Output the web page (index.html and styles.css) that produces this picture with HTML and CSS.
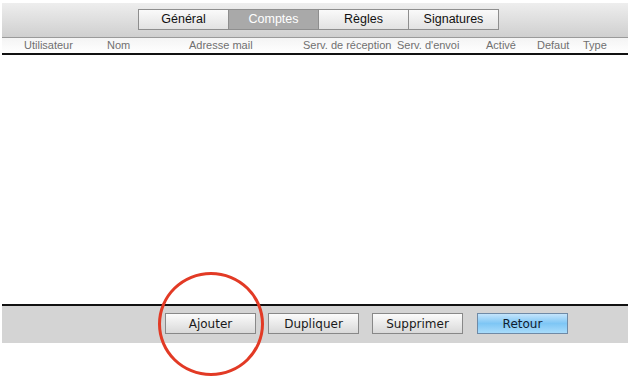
FILE: index.html
```html
<!DOCTYPE html>
<html lang="fr">
<head>
  <meta charset="UTF-8">
  <title>Comptes</title>
  <link rel="stylesheet" href="styles.css">
</head>
<body>
  <div class="window">
    <div class="toolbar">
      <div class="tabs">
        <div class="tab">Général</div>
        <div class="tab active">Comptes</div>
        <div class="tab">Règles</div>
        <div class="tab">Signatures</div>
      </div>
    </div>
    <div class="table-head">
      <span class="col c-user">Utilisateur</span>
      <span class="col c-nom">Nom</span>
      <span class="col c-mail">Adresse mail</span>
      <span class="col c-recv">Serv. de réception</span>
      <span class="col c-send">Serv. d'envoi</span>
      <span class="col c-act">Activé</span>
      <span class="col c-def">Defaut</span>
      <span class="col c-type">Type</span>
    </div>
    <div class="table-body"></div>
    <div class="actions">
      <button class="btn">Ajouter</button>
      <button class="btn">Dupliquer</button>
      <button class="btn">Supprimer</button>
      <button class="btn primary">Retour</button>
    </div>
    <div class="highlight"></div>
  </div>
</body>
</html>
```

FILE: styles.css
```css
body {
  margin: 0;
  background: #fff;
  font-family: 'Liberation Sans', Arial, sans-serif;
}

.window {
  position: relative;
  width: 626px;
  min-height: 375px;
  margin: 0 2px;
  padding-top: 3px;
}

.toolbar {
  height: 34px;
  background: linear-gradient(#eeeeee, #cfcfcf);
  display: flex;
  justify-content: center;
  padding-top: 6px;
  box-sizing: border-box;
}

.tabs {
  display: flex;
  height: 21px;
  margin-left: 7px;
  border: 1px solid #8e8e8e;
  box-sizing: border-box;
  align-self: flex-start;
}

.tab {
  width: 89px;
  text-align: center;
  font-size: 12.5px;
  line-height: 19px;
  color: #111;
  background: linear-gradient(#fafafa, #e2e2e2);
  border-left: 1px solid #8e8e8e;
}

.tab:first-child {
  border-left: none;
}

.tab.active {
  background: #a9a9a9;
  color: #fff;
}

.table-head {
  display: flex;
  height: 15px;
  border-top: 1px solid #9a9a9a;
  border-bottom: 2px solid #111;
  background: linear-gradient(#f4f4f4, #ffffff);
  font-size: 11px;
  line-height: 15px;
  color: #707070;
}

.col {
  white-space: nowrap;
}

.c-user { margin-left: 22px; width: 83px; }
.c-nom { width: 82px; }
.c-mail { width: 114px; }
.c-recv { width: 94px; }
.c-send { width: 89px; }
.c-act { width: 51px; }
.c-def { width: 46px; }
.c-type { width: 30px; }

.table-body {
  height: 249px;
}

.actions {
  display: flex;
  gap: 12px;
  height: 39px;
  padding: 7px 0 0 163px;
  box-sizing: border-box;
  border-top: 2px solid #111;
  background: #d4d4d4;
}

.btn {
  width: 91px;
  height: 21px;
  padding: 0;
  border: 1px solid #888;
  background: linear-gradient(#fbfbfb, #d9d9d9);
  font-family: 'DejaVu Sans', Verdana, sans-serif;
  font-size: 12px;
  color: #1a1a1a;
}

.btn:nth-child(3) { margin-left: 1px; }

.btn.primary {
  margin-left: 2px;
  background: linear-gradient(#c4e4fb, #7ec6f5 50%, #a9dcfb);
  border-color: #6f8aa6;
  color: #102030;
}

.highlight {
  position: absolute;
  left: 156px;
  top: 272px;
  width: 100px;
  height: 98px;
  border: 3px solid #e23a25;
  border-radius: 50%;
}
```
